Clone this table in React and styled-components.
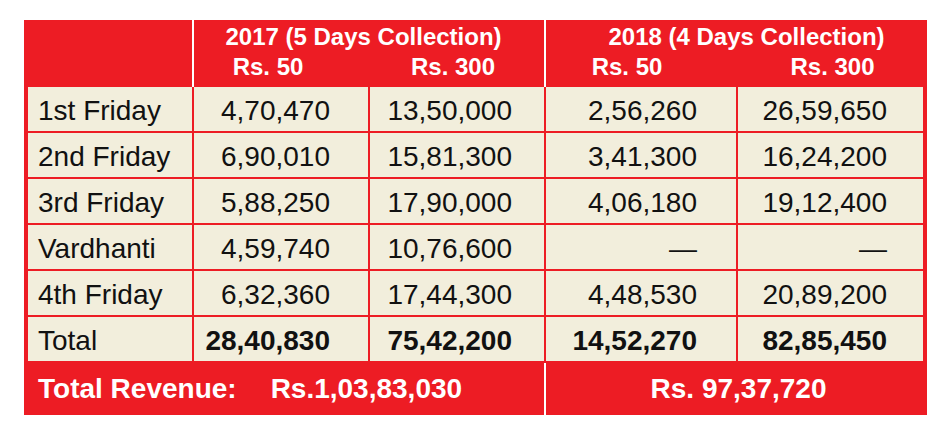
import React from "react";
import styled, { createGlobalStyle } from "styled-components";

const RED = "#ED1C24";
const CREAM = "#F2EEDC";
const COLS = "164px 174px 174px 190px 185px";

const Global = createGlobalStyle`
  html, body { margin: 0; padding: 0; background: #fff; }
  body { font-family: "Liberation Sans", Arial, sans-serif; }
  *, *::before, *::after { box-sizing: border-box; }
`;

const Board = styled.div`
  margin: 20px 0 0 24px;
  width: 903px;
  background: ${RED};
  padding: 0 4px;
  display: flex;
  flex-direction: column;
`;

const Header = styled.div`
  display: flex;
  height: 67px;
  margin-left: -4px;
`;

const Corner = styled.div`
  width: 168px;
`;

const WhiteRule = styled.div`
  width: 2px;
  align-self: stretch;
  background: #fff;
`;

const Group = styled.div`
  width: ${(p) => p.$width}px;
  display: flex;
  flex-direction: column;
  color: #fff;
  font-weight: 700;
  font-size: 24px;
  padding-top: 2px;
`;

const GroupTitle = styled.div`
  text-align: center;
  line-height: 30px;
  padding-left: ${(p) => p.$pl || 0}px;
  padding-right: ${(p) => p.$pr || 0}px;
`;

const SubRow = styled.div`
  display: grid;
  grid-template-columns: ${(p) => p.$cols};
  column-gap: 2px;
`;

const SubLabel = styled.div`
  text-align: center;
  line-height: 30px;
  padding-left: ${(p) => p.$pl || 0}px;
  padding-right: ${(p) => p.$pr || 0}px;
`;

const Body = styled.div`
  display: grid;
  grid-template-columns: ${COLS};
  grid-auto-rows: 44px;
  column-gap: 2px;
  row-gap: 2px;
  padding-bottom: 2px;
`;

const Cell = styled.div`
  background: ${CREAM};
  color: #111;
  font-size: ${(p) => (p.$bold && p.$num ? 28 : 28)}px;
  font-weight: ${(p) => (p.$bold ? 700 : 400)};
  display: flex;
  align-items: center;
  padding-top: 3px;
  justify-content: ${(p) => (p.$num ? "flex-end" : "flex-start")};
  padding-left: ${(p) => (p.$num ? 0 : 10)}px;
  padding-right: ${(p) => p.$pr || 0}px;
  white-space: nowrap;
`;

const Footer = styled.div`
  display: flex;
  height: 52px;
  margin-right: -4px;
  color: #fff;
  font-weight: 700;
  font-size: 28px;
`;

const FooterLeft = styled.div`
  width: 516px;
  display: flex;
  align-items: center;
  padding-left: 10px;
  gap: 34px;
`;

const FooterRight = styled.div`
  flex: 1;
  display: flex;
  align-items: center;
  justify-content: center;
  padding-left: 4px;
`;

const PR = [38, 32, 39, 36];

const rows = [
  ["1st Friday", "4,70,470", "13,50,000", "2,56,260", "26,59,650"],
  ["2nd Friday", "6,90,010", "15,81,300", "3,41,300", "16,24,200"],
  ["3rd Friday", "5,88,250", "17,90,000", "4,06,180", "19,12,400"],
  ["Vardhanti", "4,59,740", "10,76,600", "—", "—"],
  ["4th Friday", "6,32,360", "17,44,300", "4,48,530", "20,89,200"],
  ["Total", "28,40,830", "75,42,200", "14,52,270", "82,85,450", true],
];

export default function App() {
  return (
    <>
      <Global />
      <Board>
        <Header>
          <Corner />
          <WhiteRule />
          <Group $width={350}>
            <GroupTitle $pr={11}>2017 (5 Days Collection)</GroupTitle>
            <SubRow $cols="174px 174px">
              <SubLabel $pr={26}>Rs. 50</SubLabel>
              <SubLabel $pr={8}>Rs. 300</SubLabel>
            </SubRow>
          </Group>
          <WhiteRule />
          <Group $width={377}>
            <GroupTitle $pl={24}>2018 (4 Days Collection)</GroupTitle>
            <SubRow $cols="190px 185px">
              <SubLabel $pr={28}>Rs. 50</SubLabel>
              <SubLabel $pl={4}>Rs. 300</SubLabel>
            </SubRow>
          </Group>
        </Header>
        <Body>
          {rows.map((r) => {
            const bold = !!r[5];
            return (
              <React.Fragment key={r[0]}>
                <Cell>{r[0]}</Cell>
                {r.slice(1, 5).map((v, i) => (
                  <Cell key={i} $num $bold={bold} $pr={PR[i]}>
                    {v}
                  </Cell>
                ))}
              </React.Fragment>
            );
          })}
        </Body>
        <Footer>
          <FooterLeft>
            <span>Total Revenue:</span>
            <span>Rs.1,03,83,030</span>
          </FooterLeft>
          <WhiteRule />
          <FooterRight>Rs. 97,37,720</FooterRight>
        </Footer>
      </Board>
    </>
  );
}
